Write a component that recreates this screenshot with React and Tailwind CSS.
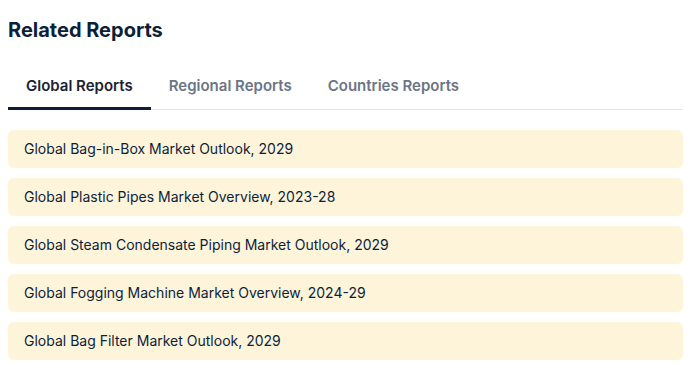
import React, { useState } from "react";

const tabs = ["Global Reports", "Regional Reports", "Countries Reports"];

const reports = [
  "Global Bag-in-Box Market Outlook, 2029",
  "Global Plastic Pipes Market Overview, 2023-28",
  "Global Steam Condensate Piping Market Outlook, 2029",
  "Global Fogging Machine Market Overview, 2024-29",
  "Global Bag Filter Market Outlook, 2029",
];

const App = () => {
  const [active, setActive] = useState(0);

  return (
    <div
      className="min-h-screen bg-white pl-2 pr-[5px] pt-4"
      style={{ fontFamily: "Inter, 'Noto Sans', sans-serif" }}
    >
      <h2 className="text-[20px] leading-7 font-bold text-[#0b1f3a]">
        Related Reports
      </h2>

      <div className="mt-[18px] flex border-b border-gray-200">
        {tabs.map((tab, index) => (
          <button
            key={index}
            onClick={() => setActive(index)}
            className={
              index === active
                ? "-mb-px px-[18px] pt-[14px] pb-[11px] text-[15px] leading-5 font-semibold text-[#1b2230] border-b-[3px] border-[#0b1f3a]"
                : "-mb-px px-[18px] pt-[14px] pb-[11px] text-[15px] leading-5 font-semibold text-[#6b7585] border-b-[3px] border-transparent"
            }
          >
            {tab}
          </button>
        ))}
      </div>

      <div className="mt-5 flex flex-col gap-[10px]">
        {reports.map((report, index) => (
          <a
            key={index}
            href="#"
            className="flex h-[38px] items-center rounded-md bg-[#fef4da] px-4 pb-px text-[14px] text-[#0b1f3a]"
          >
            {report}
          </a>
        ))}
      </div>
    </div>
  );
};

export default App;
